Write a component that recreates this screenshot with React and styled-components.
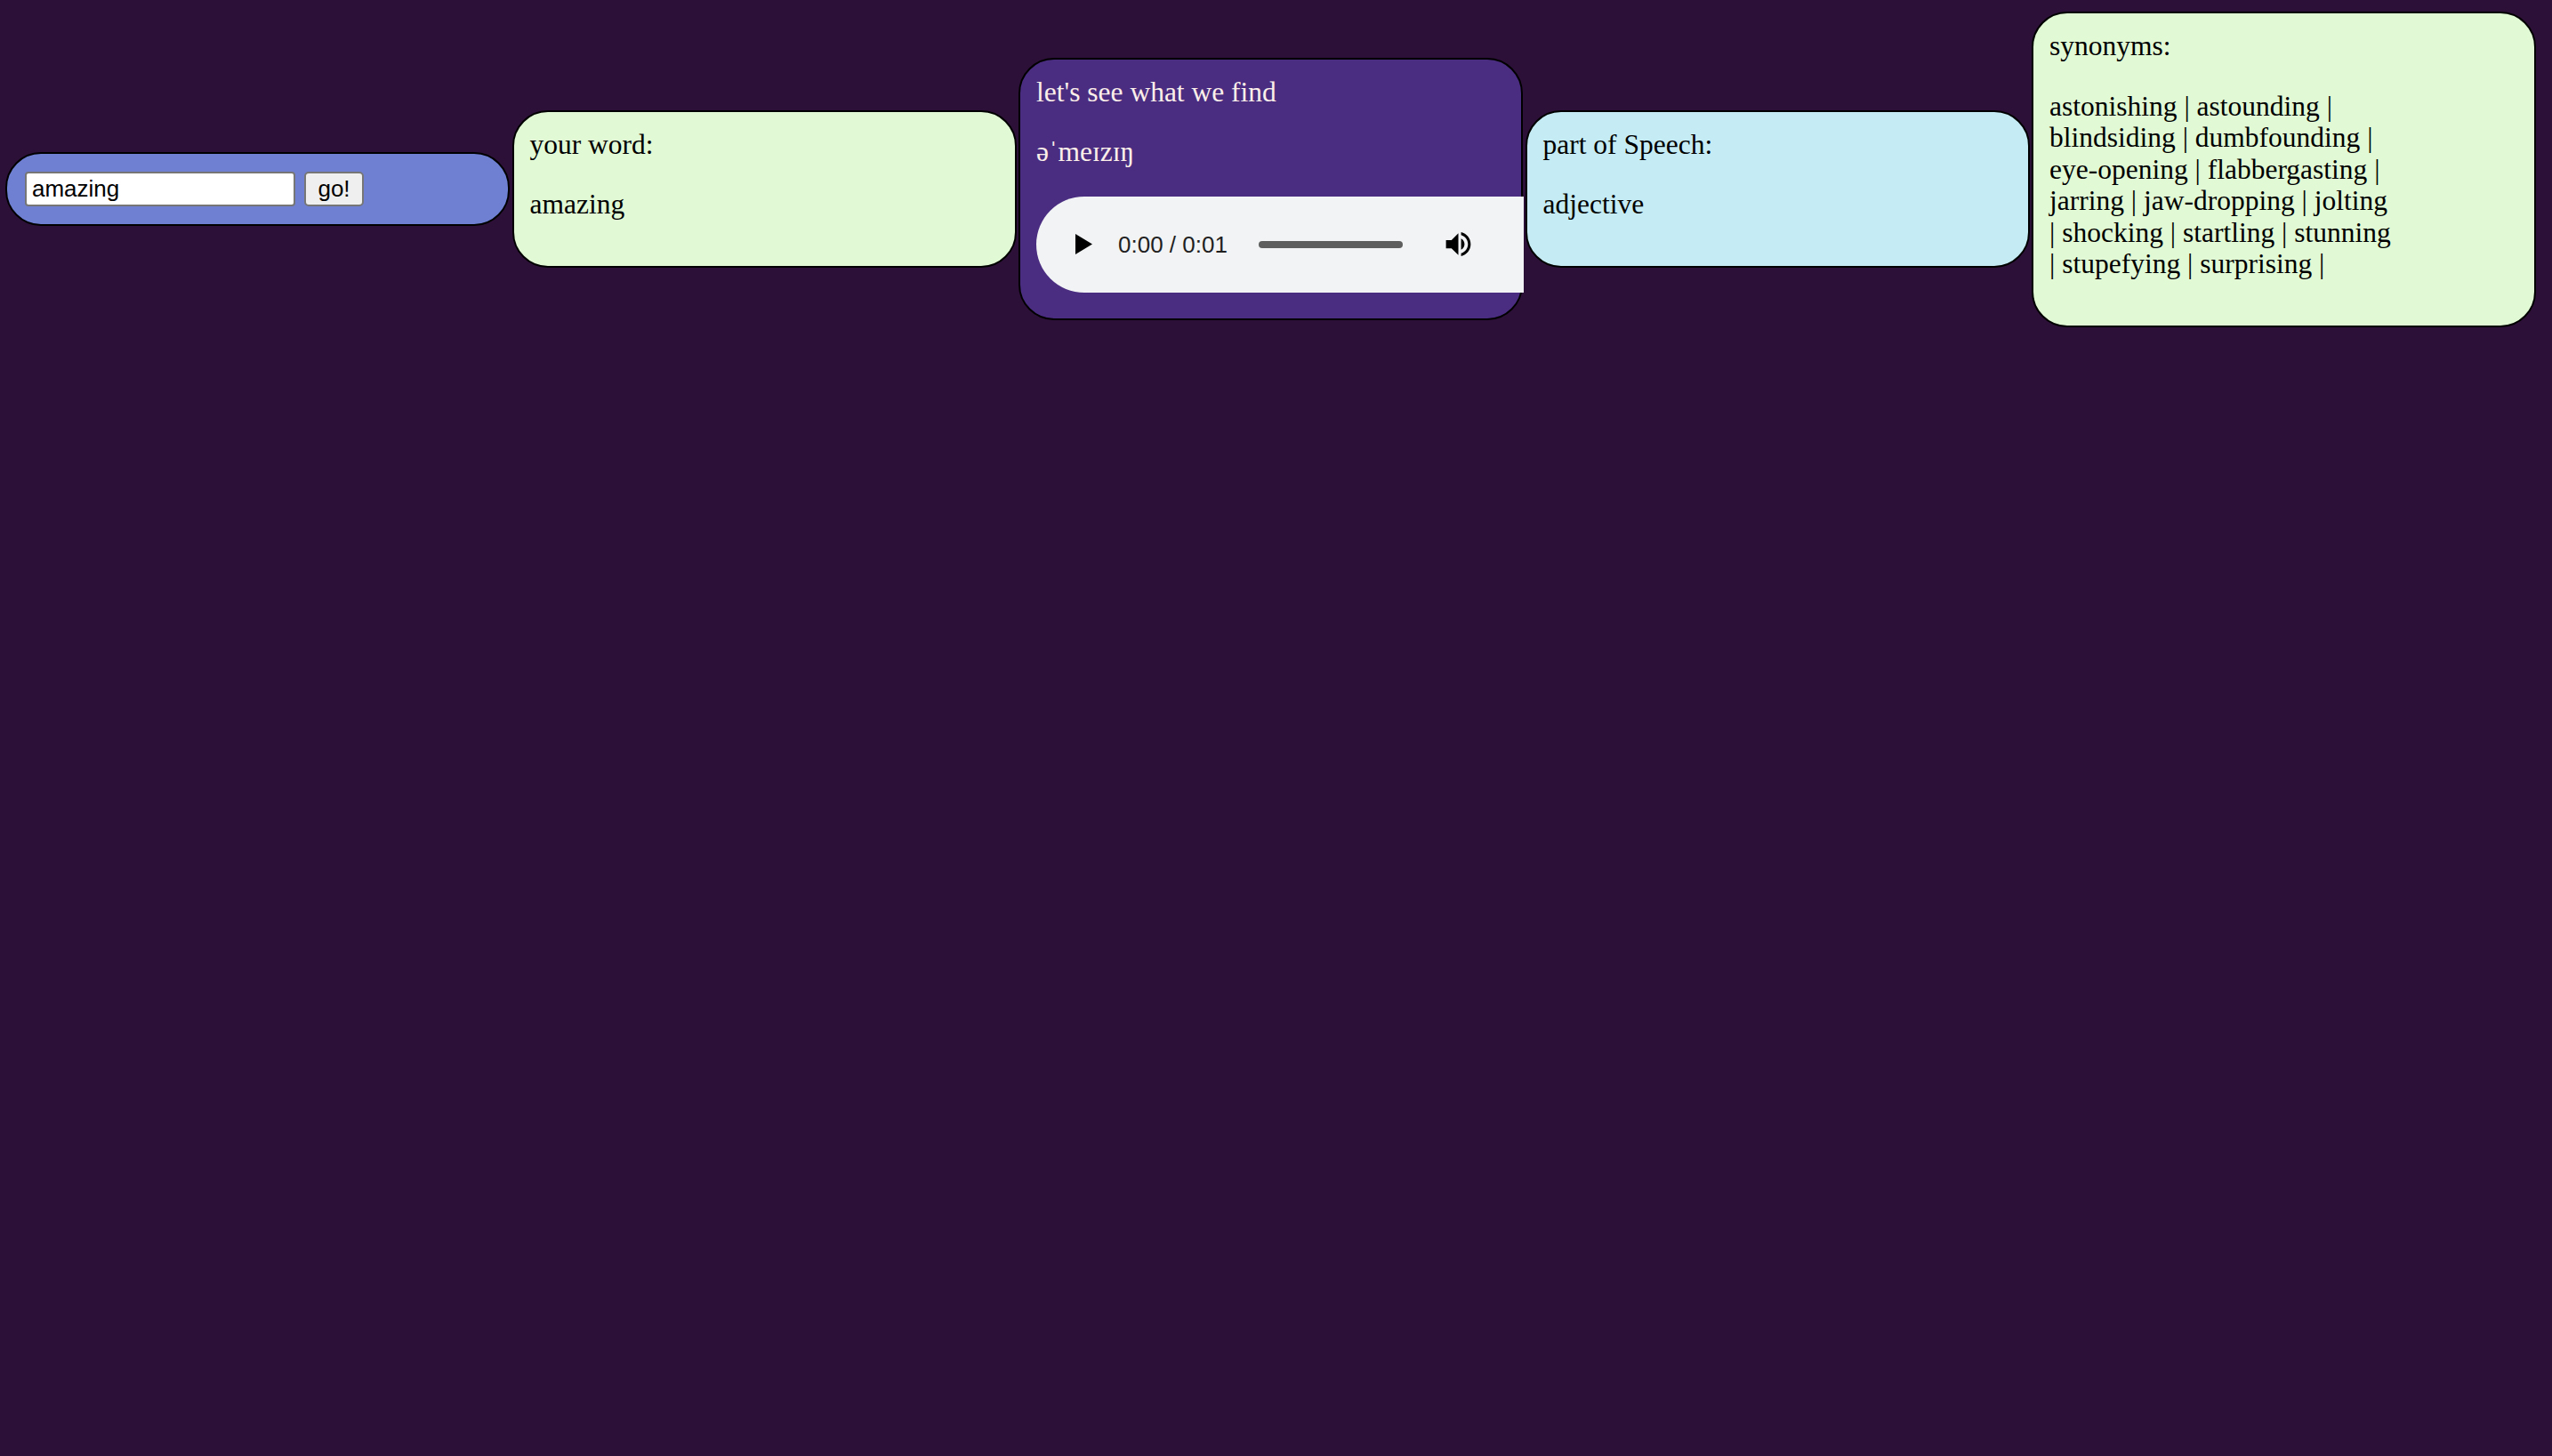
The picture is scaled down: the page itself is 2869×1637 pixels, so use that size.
import React from "react";
import styled, { createGlobalStyle } from "styled-components";

const GlobalStyle = createGlobalStyle`
  html,
  body {
    margin: 0;
    background: #2d1038;
  }
  body {
    min-height: 100vh;
    font-family: "Liberation Serif", "Times New Roman", serif;
  }
`;

const Row = styled.main`
  display: flex;
  align-items: center;
  gap: 2.5px;
  height: 398px;
  padding: 13px 0 0 6px;
`;

const Card = styled.section`
  flex: 0 0 567px;
  min-width: 0;
  box-sizing: border-box;
  align-self: ${(p) => (p.$top ? "flex-start" : "center")};
  padding: 19px 18px;
  border: 2px solid #000;
  border-radius: 40px;
  background: ${(p) => p.$bg};
  color: ${(p) => p.$ink || "#000"};
  font-size: 31.5px;
  line-height: 35.5px;
  p {
    margin: 32px 0;
  }
`;

const SearchCard = styled(Card)`
  padding: 20px;
`;

const Form = styled.form`
  display: flex;
  align-items: center;
  gap: 10px;
  margin: 0;
`;

const Input = styled.input`
  box-sizing: border-box;
  width: 304px;
  height: 39px;
  padding: 0 6px;
  border: 2px solid #767676;
  border-radius: 4px;
  background: #fff;
  font-family: "Liberation Sans", Arial, sans-serif;
  font-size: 26px;
  color: #000;
`;

const Go = styled.button`
  box-sizing: border-box;
  width: 67px;
  height: 39px;
  padding: 0;
  border: 2px solid #767676;
  border-radius: 5px;
  background: #efefef;
  font-family: "Liberation Sans", Arial, sans-serif;
  font-size: 26px;
  color: #000;
`;

const Synonyms = styled.p`
  max-width: 12.35em;
`;

// fake audio element, drawn like chrome's controls; it is wider than the
// card and runs over its right border, cut off square
const Player = styled.div`
  display: flex;
  align-items: center;
  box-sizing: border-box;
  width: 548px;
  height: 108px;
  margin: 5px 0 10px;
  padding-left: 44px;
  border-radius: 54px 0 0 54px;
  background: #f1f3f4;
  color: #1f1f1f;
  font-family: "Liberation Sans", Arial, sans-serif;
  font-size: 26px;
  line-height: 1;
`;

const Time = styled.span`
  margin-left: 29px;
`;

const Track = styled.div`
  width: 162px;
  height: 8px;
  margin-left: 35px;
  border-radius: 4px;
  background: #5e5e5e;
`;

const Volume = styled.svg`
  margin-left: 44px;
`;

const synonyms = [
  "astonishing",
  "astounding",
  "blindsiding",
  "dumbfounding",
  "eye-opening",
  "flabbergasting",
  "jarring",
  "jaw-dropping",
  "jolting",
  "shocking",
  "startling",
  "stunning",
  "stupefying",
  "surprising",
];

export default function App() {
  return (
    <>
      <GlobalStyle />
      <Row>
        <SearchCard $bg="#6f80d3">
          <Form onSubmit={(e) => e.preventDefault()}>
            <Input defaultValue="amazing" />
            <Go type="submit">go!</Go>
          </Form>
        </SearchCard>

        <Card $bg="#e1f9d5">
          <div>your word:</div>
          <p>amazing</p>
        </Card>

        <Card $bg="#4a2d81" $ink="#fcefe9">
          <div>let's see what we find</div>
          <p>əˈmeɪzɪŋ</p>
          <Player>
            <svg width="19" height="23" viewBox="0 0 19 23">
              <polygon points="0,0 19,11.5 0,23" fill="#000" />
            </svg>
            <Time>0:00 / 0:01</Time>
            <Track />
            <Volume width="37" height="37" viewBox="0 0 24 24">
              <path
                fill="#000"
                d="M3 9v6h4l5 5V4L7 9H3zm13.5 3c0-1.77-1.02-3.29-2.5-4.03v8.05c1.48-.73 2.5-2.25 2.5-4.02zM14 3.23v2.06c2.89.86 5 3.54 5 6.71s-2.11 5.85-5 6.71v2.06c4.01-.91 7-4.49 7-8.77s-2.99-7.86-7-8.77z"
              />
            </Volume>
          </Player>
        </Card>

        <Card $bg="#c5ecf4">
          <div>part of Speech:</div>
          <p>adjective</p>
        </Card>

        <Card $bg="#e1f9d5" $top>
          <div>synonyms:</div>
          <Synonyms>{synonyms.join(" | ") + " |"}</Synonyms>
        </Card>
      </Row>
    </>
  );
}
